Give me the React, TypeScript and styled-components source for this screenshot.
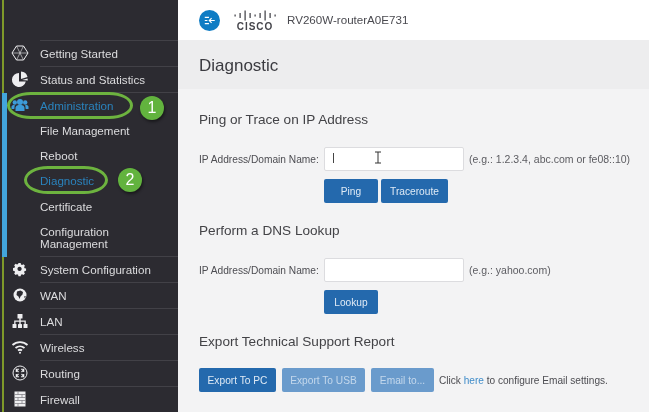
import React from "react";
import styled, { createGlobalStyle } from "styled-components";

const Global = createGlobalStyle`
  html, body { margin: 0; padding: 0; width: 649px; height: 412px; overflow: hidden; background: #f3f3f3; }
  * { box-sizing: border-box; }
  #root { width: 649px; height: 412px; }
`;

const Page = styled.div`
  position: relative;
  display: flex;
  width: 649px;
  height: 412px;
  overflow: hidden;
  font-family: "Liberation Sans", Arial, sans-serif;
  filter: blur(0.35px);
`;

const Sidebar = styled.nav`
  position: relative;
  width: 178px;
  flex: none;
  background: #2c2b31;
  padding-top: 40px;
  display: flex;
  flex-direction: column;
`;

const OliveLine = styled.div`
  position: absolute;
  left: 2px;
  top: 0;
  bottom: 0;
  width: 1.5px;
  background: #7f9a2a;
`;

const ActiveStrip = styled.div`
  position: absolute;
  left: 2px;
  top: 93px;
  width: 5px;
  height: 164px;
  background: #43a5dc;
`;

const Row = styled.div<{ $active?: boolean }>`
  display: flex;
  align-items: center;
  height: 26px;
  margin-left: 40px;
  border-top: 1px solid #424147;
  font-size: 11.6px;
  color: ${(p) => (p.$active ? "#2a83bd" : "#dcdcde")};
  position: relative;
`;

const IconSlot = styled.span<{ $active?: boolean }>`
  position: absolute;
  left: -29px;
  top: 3px;
  width: 18px;
  height: 18px;
  color: ${(p) => (p.$active ? "#3d9bd8" : "#eeeef0")};
  display: flex;
  align-items: center;
  justify-content: center;
`;

const SubRow = styled.div<{ $active?: boolean; $tall?: boolean }>`
  display: flex;
  align-items: center;
  height: ${(p) => (p.$tall ? 37 : 25.5)}px;
  margin-left: 40px;
  font-size: 11.6px;
  line-height: 12px;
  color: ${(p) => (p.$active ? "#2a83bd" : "#dcdcde")};
`;

const Main = styled.main`
  flex: 1;
  display: flex;
  flex-direction: column;
  min-width: 0;
`;

const TopBar = styled.header`
  height: 40px;
  background: #fff;
  display: flex;
  align-items: center;
  padding-left: 21px;
`;

const Logo = styled.div`
  margin-left: 13px;
  width: 44px;
  display: flex;
  flex-direction: column;
  align-items: center;
  color: #45454b;
  padding-top: 1px;
`;

const LogoWord = styled.span`
  font-weight: 700;
  font-size: 10px;
  letter-spacing: 1px;
  line-height: 10px;
  margin-top: 1px;
`;

const DeviceName = styled.span`
  margin-left: 10px;
  font-size: 11.6px;
  color: #4a4a50;
  margin-top: -2px;
`;

const TitleBar = styled.div`
  height: 49px;
  background: #ededee;
  display: flex;
  align-items: center;
  padding-left: 21px;
  font-size: 17px;
  color: #3b3b40;
  padding-top: 3px;
`;

const Content = styled.div`
  flex: 1;
  background: #f3f3f4;
  padding: 22px 0 0 21px;
  display: flex;
  flex-direction: column;
`;

const SectionTitle = styled.h2<{ $top?: number }>`
  margin: ${(p) => p.$top ?? 0}px 0 0;
  font-size: 13.6px;
  font-weight: 400;
  line-height: 18px;
  color: #434347;
`;

const Field = styled.div`
  display: flex;
  align-items: center;
  height: 24px;
  margin-top: 18px;
`;

const FieldLabel = styled.label`
  width: 125px;
  flex: none;
  white-space: nowrap;
  font-size: 10.2px;
  color: #4d4d52;
`;

const TextBox = styled.div`
  position: relative;
  width: 140px;
  height: 24px;
  background: #fff;
  border: 1px solid #dcdcdf;
  border-radius: 2px;
  flex: none;
`;

const Caret = styled.span`
  position: absolute;
  left: 8px;
  top: 5px;
  width: 1px;
  height: 10px;
  background: #444;
`;

const Hint = styled.span`
  margin-left: 5px;
  font-size: 10.5px;
  white-space: nowrap;
  color: #5c5c61;
`;

const Actions = styled.div<{ $indent?: boolean; $gap?: number; $top?: number }>`
  display: flex;
  align-items: center;
  gap: ${(p) => p.$gap ?? 3}px;
  margin-top: ${(p) => p.$top ?? 8}px;
  padding-left: ${(p) => (p.$indent ? 125 : 0)}px;
`;

const Btn = styled.button<{ $w: number; $muted?: boolean }>`
  width: ${(p) => p.$w}px;
  height: 24px;
  border: 0;
  padding: 0;
  border-radius: 2px;
  background: ${(p) => (p.$muted ? "#6a9bcc" : "#2469ad")};
  color: ${(p) => (p.$muted ? "#c4d8ec" : "#dfeaf5")};
  font-family: inherit;
  font-size: 10.2px;
`;

const Note = styled.span`
  margin-left: -1px;
  font-size: 10.1px;
  white-space: nowrap;
  color: #4d4d52;
`;

const Here = styled.span`
  color: #3f8cc9;
`;

const Ellipse = styled.div<{ $x: number; $y: number; $w: number; $h: number }>`
  position: absolute;
  left: ${(p) => p.$x}px;
  top: ${(p) => p.$y}px;
  width: ${(p) => p.$w}px;
  height: ${(p) => p.$h}px;
  border: 3px solid #6db33f;
  border-radius: 24px / 50%;
`;

const Badge = styled.div<{ $x: number; $y: number }>`
  position: absolute;
  left: ${(p) => p.$x}px;
  top: ${(p) => p.$y}px;
  width: 24px;
  height: 24px;
  border-radius: 50%;
  background: #62b33e;
  box-shadow: 1px 2px 3px rgba(0, 0, 0, 0.45);
  color: #fff;
  font-size: 16px;
  display: flex;
  align-items: center;
  justify-content: center;
`;

const ICursor = styled.svg`
  position: absolute;
  left: 374px;
  top: 151px;
`;

const ic = { width: 18, height: 18, viewBox: "0 0 18 18" };

const GettingIcon = () => (
  <svg {...ic} fill="none" stroke="currentColor" strokeWidth="1">
    <path d="M5.500 2h7L17 9l-4.500 7h-7L1 9z" />
    <path d="M5.500 2l7 14M12.500 2l-7 14M1 9h16" opacity=".6" />
  </svg>
);
const PieIcon = () => (
  <svg {...ic} fill="currentColor">
    <path d="M8 3a7 7 0 1 0 6.800 8.500H8z" />
    <path d="M10 1.500a7 7 0 0 1 6.500 5.500L10 9z" />
    <path d="M11 10l5.500-1.500.3 2z" />
  </svg>
);
const UsersIcon = () => (
  <svg {...ic} fill="currentColor">
    <circle cx="9" cy="6" r="3" />
    <circle cx="3.800" cy="6.500" r="2.200" />
    <circle cx="14.200" cy="6.500" r="2.200" />
    <path d="M4.500 15v-3.500a3 3 0 0 1 3-2.500h3a3 3 0 0 1 3 2.500V15z" />
    <path d="M0.500 13v-2.500A2 2 0 0 1 2.500 9h1.300L3.300 13zM17.500 13v-2.500a2 2 0 0 0-2-1.500h-1.300l.5 4z" />
  </svg>
);
const GearIcon = () => (
  <svg {...ic} fill="currentColor" fillRule="evenodd">
    <path d="M7.500 2h3l.4 2 1.500.7 1.800-1.100 2 2.100-1.100 1.700.6 1.600 2 .4v2.800l-2 .4-.6 1.600 1.100 1.700-2 2-1.800-1-1.500.6-.4 2h-3l-.4-2-1.500-.6-1.800 1-2-2 1.100-1.700-.6-1.600-2-.4V8.800l2-.4.6-1.600-1.100-1.700 2-2.100 1.800 1.100 1.500-.7zM9 7a2.800 2.800 0 1 0 .01 0z" transform="translate(1.800 1.500) scale(.75)" />
  </svg>
);
const GlobeIcon = () => (
  <svg {...ic}>
    <circle cx="9" cy="9" r="6.500" fill="currentColor" />
    <path d="M6 5.500l3.500-1 2.500 1.500-.5 2.500-2 2-1 2.500-1-2.500-2-1.500zM13 10.500l1.800-.5-.8 2.500z" fill="#2c2b31" />
  </svg>
);
const LanIcon = () => (
  <svg {...ic} fill="currentColor">
    <rect x="6.500" y="2" width="5" height="4.500" rx=".5" />
    <rect x="1.500" y="12" width="4" height="4" rx=".5" />
    <rect x="7" y="12" width="4" height="4" rx=".5" />
    <rect x="12.500" y="12" width="4" height="4" rx=".5" />
    <path d="M8.300 6h1.400v2.500h5.100V12h-1.300V9.700H9.700V12H8.300V9.700H4.500V12H3.200V8.500h5.100z" />
  </svg>
);
const WifiIcon = () => (
  <svg {...ic} fill="none" stroke="currentColor" strokeWidth="1.800">
    <path d="M1.500 7a11 11 0 0 1 15 0" />
    <path d="M4.500 10a7 7 0 0 1 9 0" />
    <path d="M7 12.500a3.200 3.200 0 0 1 4 0" />
    <circle cx="9" cy="14.700" r="1" fill="currentColor" stroke="none" />
  </svg>
);
const RoutingIcon = () => (
  <svg {...ic} fill="none" stroke="currentColor" strokeWidth="1">
    <circle cx="9" cy="9" r="7" />
    <path d="M5 5.500l2.500 2.500M5.300 8V5.300H8M13 5.500L10.500 8M12.700 8V5.300H10M5 12.500L7.500 10M5.300 10v2.700H8M13 12.500L10.500 10M12.700 10v2.700H10" strokeWidth="1.100" />
  </svg>
);
const FirewallIcon = () => (
  <svg {...ic} fill="currentColor">
    <path d="M3.500 1.500h11v15h-11z" />
    <path d="M3.500 4.500h11M3.500 7.500h11M3.500 10.500h11M3.500 13.500h11M7 1.500v3M11 4.500v3M7 7.500v3M11 10.500v3M7 13.500v3" stroke="#77767b" strokeWidth=".7" fill="none" />
  </svg>
);

const bars = [2, 5, 10, 5, 2, 5, 10, 5, 2];

const CiscoBars = () => (
  <svg width="44" height="11" viewBox="0 0 44 11" fill="#3a3a40">
    {bars.map((h, i) => (
      <rect key={i} x={1.500 + i * 5} y={5.500 - h / 2} width="1.200" height={h} />
    ))}
  </svg>
);

const NavToggle = () => (
  <svg width="21" height="21" viewBox="0 0 20 20">
    <circle cx="10" cy="10" r="10" fill="#0f7cc4" />
    <path d="M5.500 7h4M5.500 10h2.500M5.500 13h4M15 10h-5M12 7.800L9.800 10l2.200 2.200" stroke="#fff" strokeWidth="1.100" fill="none" />
  </svg>
);

export default function App() {
  return (
    <Page>
      <Global />
      <Sidebar>
        <OliveLine />
        <ActiveStrip />
        <Row><IconSlot><GettingIcon /></IconSlot>Getting Started</Row>
        <Row><IconSlot><PieIcon /></IconSlot>Status and Statistics</Row>
        <Row $active><IconSlot $active><UsersIcon /></IconSlot>Administration</Row>
        <SubRow>File Management</SubRow>
        <SubRow>Reboot</SubRow>
        <SubRow $active>Diagnostic</SubRow>
        <SubRow>Certificate</SubRow>
        <SubRow $tall>Configuration<br />Management</SubRow>
        <Row><IconSlot><GearIcon /></IconSlot>System Configuration</Row>
        <Row><IconSlot><GlobeIcon /></IconSlot>WAN</Row>
        <Row><IconSlot><LanIcon /></IconSlot>LAN</Row>
        <Row><IconSlot><WifiIcon /></IconSlot>Wireless</Row>
        <Row><IconSlot><RoutingIcon /></IconSlot>Routing</Row>
        <Row><IconSlot><FirewallIcon /></IconSlot>Firewall</Row>
      </Sidebar>
      <Main>
        <TopBar>
          <NavToggle />
          <Logo>
            <CiscoBars />
            <LogoWord>CISCO</LogoWord>
          </Logo>
          <DeviceName>RV260W-routerA0E731</DeviceName>
        </TopBar>
        <TitleBar>Diagnostic</TitleBar>
        <Content>
          <SectionTitle>Ping or Trace on IP Address</SectionTitle>
          <Field>
            <FieldLabel>IP Address/Domain Name:</FieldLabel>
            <TextBox><Caret /></TextBox>
            <Hint>(e.g.: 1.2.3.4, abc.com or fe08::10)</Hint>
          </Field>
          <Actions $indent>
            <Btn $w={54}>Ping</Btn>
            <Btn $w={67}>Traceroute</Btn>
          </Actions>
          <SectionTitle $top={19}>Perform a DNS Lookup</SectionTitle>
          <Field>
            <FieldLabel>IP Address/Domain Name:</FieldLabel>
            <TextBox />
            <Hint>(e.g.: yahoo.com)</Hint>
          </Field>
          <Actions $indent>
            <Btn $w={54}>Lookup</Btn>
          </Actions>
          <SectionTitle $top={19}>Export Technical Support Report</SectionTitle>
          <Actions $gap={6} $top={17}>
            <Btn $w={77}>Export To PC</Btn>
            <Btn $w={83} $muted>Export To USB</Btn>
            <Btn $w={63} $muted>Email to...</Btn>
            <Note>Click <Here>here</Here> to configure Email settings.</Note>
          </Actions>
        </Content>
      </Main>
      <Ellipse $x={7} $y={92} $w={126} $h={27} />
      <Ellipse $x={24} $y={166} $w={84} $h={28} />
      <Badge $x={140} $y={96}>1</Badge>
      <Badge $x={118} $y={168}>2</Badge>
      <ICursor width="8" height="13" viewBox="0 0 8 13" fill="none" stroke="#333" strokeWidth="1">
        <path d="M1 1h6M1 12h6M4 1v11" />
      </ICursor>
    </Page>
  );
}
